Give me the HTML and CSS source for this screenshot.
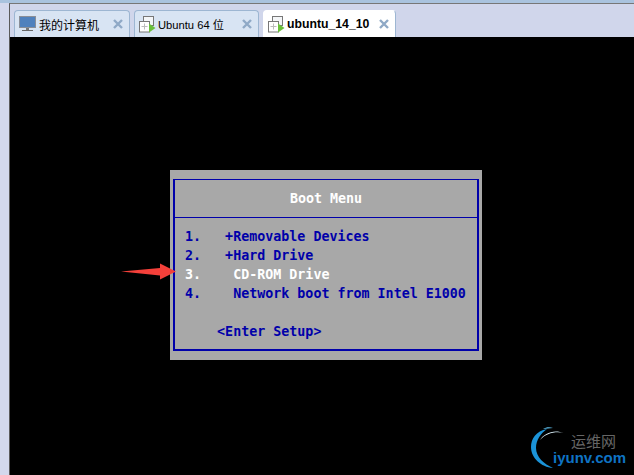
FILE: index.html
```html
<!DOCTYPE html>
<html lang="zh">
<head>
<meta charset="utf-8">
<title>Boot Menu</title>
<link rel="stylesheet" href="styles.css">
</head>
<body>
<div class="app">
  <div class="topline"></div>
  <div class="frame">
    <div class="tabs">
      <div class="tab tab-home">
        <svg class="icon" width="18" height="17" viewBox="0 0 18 17"><rect x="0.5" y="0.5" width="16" height="11" fill="#4f81bd" stroke="#8a8f98"/><rect x="7" y="12" width="3" height="2" fill="#777"/><rect x="3" y="14" width="11" height="1" fill="#666"/></svg>
        <span class="label cjk">我的计算机</span>
        <svg class="close" width="10" height="10" viewBox="0 0 10 10"><path d="M1 1l8 8M9 1l-8 8" stroke="#8fa9c6" stroke-width="2.4" fill="none"/></svg>
      </div>
      <div class="tab tab-u64">
        <svg class="vm" width="19" height="18" viewBox="0 0 19 18"><rect x="4.500" y="1.500" width="10" height="9" fill="#f4f6f8" stroke="#777"/><rect x="0.500" y="6.500" width="10" height="10.500" fill="#fff" stroke="#777"/><path d="M5.500 8.500v6M2.500 11.500h6" stroke="#bbb" fill="none"/><path d="M10 8.500l6.500 4.500-6.500 4.500z" fill="#6abf3b"/></svg>
        <span class="label">Ubuntu 64 位</span>
        <svg class="close" width="10" height="10" viewBox="0 0 10 10"><path d="M1 1l8 8M9 1l-8 8" stroke="#8fa9c6" stroke-width="2.4" fill="none"/></svg>
      </div>
      <div class="tab tab-active">
        <svg class="vm" width="19" height="18" viewBox="0 0 19 18"><rect x="4.500" y="1.500" width="10" height="9" fill="#f4f6f8" stroke="#777"/><rect x="0.500" y="6.500" width="10" height="10.500" fill="#fff" stroke="#777"/><path d="M5.500 8.500v6M2.500 11.500h6" stroke="#bbb" fill="none"/><path d="M10 8.500l6.500 4.500-6.500 4.500z" fill="#6abf3b"/></svg>
        <span class="label strong">ubuntu_14_10</span>
        <svg class="close" width="10" height="10" viewBox="0 0 10 10"><path d="M1 1l8 8M9 1l-8 8" stroke="#8fa9c6" stroke-width="2.400" fill="none"/></svg>
      </div>
    </div>
    <div class="screen">
      <div class="bios">
        <div class="bios-box">
          <div class="bios-title">Boot Menu</div>
          <div class="bios-list">
            <div class="row">1.   +Removable Devices</div>
            <div class="row">2.   +Hard Drive</div>
            <div class="row row-on">3.    CD-ROM Drive</div>
            <div class="row">4.    Network boot from Intel E1000</div>
            <div class="row row-gap">    &lt;Enter Setup&gt;</div>
          </div>
        </div>
      </div>
      <svg class="arrow" width="56" height="20" viewBox="0 0 56 20"><path d="M0 9.500L39 6V1.500L55 9.500L39 17.500V13.500Z" fill="#f4403a"/></svg>
      <div class="mark">
        <svg class="mark-logo" width="46" height="46" viewBox="0 0 46 46"><path d="M16 2C5 4 0 12 0 20C0 31 10 40 22 41C13 37 5 30 5 21C5 13 10 6 16 2z" fill="#1b93d8"/><path d="M9 13C13 6 23 2 33 6C25 4 15 6 9 13z" fill="#d8eef8"/><path d="M12 2C15 0 19 0 22 1C18 1 15 2 12 2z" fill="#5fc0ee"/></svg>
        <div class="mark-cn cjk">运维网</div>
        <div class="mark-en">iyunv.com</div>
      </div>
    </div>
  </div>
</div>
</body>
</html>
```
FILE: styles.css
```css
html, body { margin: 0; padding: 0; }
body { width: 634px; height: 475px; overflow: hidden; background: #d3d8ec; }
.app { width: 634px; height: 475px; display: flex; flex-direction: column; }
.topline { height: 3px; background: #a9c3de; }
.frame { flex: 1; margin-left: 9px; border-left: 1px solid #5a5a5a; border-top: 1px solid #777; display: flex; flex-direction: column; min-height: 0; }
.tabs { height: 33px; flex: none; display: flex; align-items: flex-end; gap: 4px; padding-left: 4px; background: #d0d6eb; }
.tab { height: 27px; box-sizing: border-box; display: flex; align-items: center; border: 1px solid #9db6d2; border-bottom: 0; border-radius: 4px 4px 0 0; background: #d8e4f3; font: 11.2px "Liberation Sans", "Noto Sans CJK SC", sans-serif; color: #000; padding-left: 4px; }
.tab-home { width: 116px; }
.tab-u64 { width: 125px; }
.tab-active { width: 133px; background: #fff; border-color: #fff; border-right-color: #9db6d2; }
.icon { flex: none; margin-right: 2px; }
.vm { flex: none; }
.label { flex: 1; white-space: nowrap; }
.cjk { font-family: "Noto Sans CJK SC", sans-serif; font-size: 12px; }
.strong { font-weight: 700; font-size: 12.25px; }
.close { flex: none; margin-right: 6px; }
.screen { flex: 1; background: #000; position: relative; padding: 133px 0 0 160px; min-height: 0; }
.bios { width: 312px; height: 190px; box-sizing: border-box; padding: 9px 3px; background: #a8a8a8; }
.bios-box { border: 2px solid #0000aa; border-top-width: 1px; height: 100%; box-sizing: border-box; font: bold 13.33px/19px "DejaVu Sans Mono", monospace; color: #0000aa; }
.bios-title { height: 37px; line-height: 37px; text-align: center; color: #fff; border-bottom: 1px solid #0000aa; }
.bios-list { padding: 9px 0 0 10px; }
.row { white-space: pre; }
.row-on { color: #fff; }
.row-gap { margin-top: 19px; }
.arrow { position: absolute; left: 111px; top: 225px; }
.mark { position: absolute; left: 521px; top: 390px; width: 104px; height: 48px; }
.mark-logo { position: absolute; left: 0; top: 0; }
.mark-cn { position: absolute; left: 40px; top: 5px; font-size: 15px; line-height: 18px; color: #666; }
.mark-en { position: absolute; left: 22px; top: 23px; font: 700 15px/16px "Liberation Sans", sans-serif; color: #0f73c4; }
```
